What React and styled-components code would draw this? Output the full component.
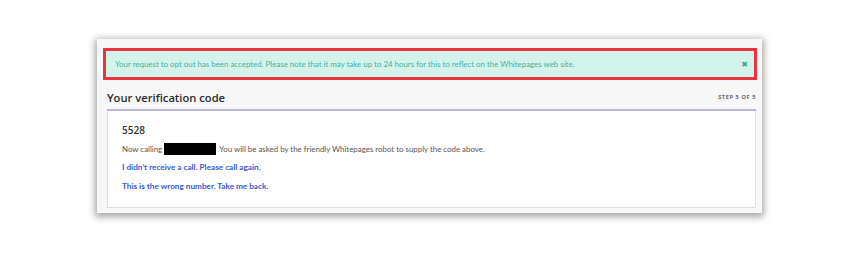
import React from "react";
import styled, { createGlobalStyle } from "styled-components";

const GlobalStyle = createGlobalStyle`
    html, body {
        margin: 0;
        background: #ffffff;
    }
    body {
        font-family: Lato, "Open Sans", sans-serif;
    }
`;

const Page = styled.div`
    width: 860px;
    height: 255px;
    padding: 39px 0 0 97px;
    box-sizing: border-box;
`;

const Panel = styled.div`
    width: 665px;
    height: 174px;
    box-sizing: border-box;
    background: #f7f7f8;
    box-shadow: 0 2px 7px 2px rgba(0, 0, 0, 0.35);
    padding: 9px 5px 0 6px;
`;

const Alert = styled.div`
    display: flex;
    align-items: center;
    justify-content: space-between;
    height: 32px;
    box-sizing: border-box;
    border: 3px solid #e8343a;
    background: #d3f2ec;
    padding: 0 6px 0 9px;
    color: #3fb49c;
    font-size: 7.9px;
`;

const Close = styled.span`
    font-family: "DejaVu Sans", sans-serif;
    font-size: 8px;
    font-weight: 700;
    color: #2fa58b;
`;

const Header = styled.div`
    display: flex;
    align-items: flex-end;
    justify-content: space-between;
    margin: 10px 1px 0 4px;
    padding-bottom: 3px;
    border-bottom: 2px solid #b8b8dc;
`;

const Title = styled.h2`
    margin: 0;
    font-family: "Open Sans", sans-serif;
    font-size: 11.2px;
    font-weight: 600;
    color: #2c2c2c;
    line-height: 16px;
`;

const Step = styled.span`
    font-family: "Open Sans", sans-serif;
    font-size: 5.6px;
    font-weight: 700;
    letter-spacing: 0.6px;
    color: #666;
    margin-bottom: 5px;
`;

const Card = styled.div`
    margin: 0 1px 0 4px;
    background: #fff;
    border: 1px solid #e0e0e0;
    border-top: none;
    height: 97px;
    box-sizing: border-box;
    padding: 13px 14px 0 14px;
`;

const Code = styled.div`
    font-family: "Open Sans", sans-serif;
    font-size: 10px;
    font-weight: 600;
    color: #333;
    line-height: 12px;
`;

const Line = styled.p`
    margin: 7px 0 0;
    display: flex;
    align-items: center;
    font-size: 7.9px;
    color: #555;
    line-height: 12px;
`;

const Redacted = styled.span`
    display: inline-block;
    width: 52px;
    height: 12px;
    background: #000;
    margin: 0 3px 0 2px;
`;

const Action = styled.a`
    display: block;
    margin-top: ${(props) => props.gap}px;
    font-size: 8.2px;
    font-weight: 700;
    color: #3a58d6;
    text-decoration: none;
    line-height: 12px;
`;

const App = () => {
    return (
        <>
            <GlobalStyle />
            <Page>
                <Panel>
                    <Alert>
                        <span>
                            Your request to opt out has been accepted. Please
                            note that it may take up to 24 hours for this to
                            reflect on the Whitepages web site.
                        </span>
                        <Close>✖</Close>
                    </Alert>
                    <Header>
                        <Title>Your verification code</Title>
                        <Step>STEP 5 OF 5</Step>
                    </Header>
                    <Card>
                        <Code>5528</Code>
                        <Line>
                            Now calling
                            <Redacted />
                            You will be asked by the friendly Whitepages robot
                            to supply the code above.
                        </Line>
                        <Action href="#" gap={6}>
                            I didn’t receive a call. Please call again.
                        </Action>
                        <Action href="#" gap={7}>
                            This is the wrong number. Take me back.
                        </Action>
                    </Card>
                </Panel>
            </Page>
        </>
    );
};

export default App;
